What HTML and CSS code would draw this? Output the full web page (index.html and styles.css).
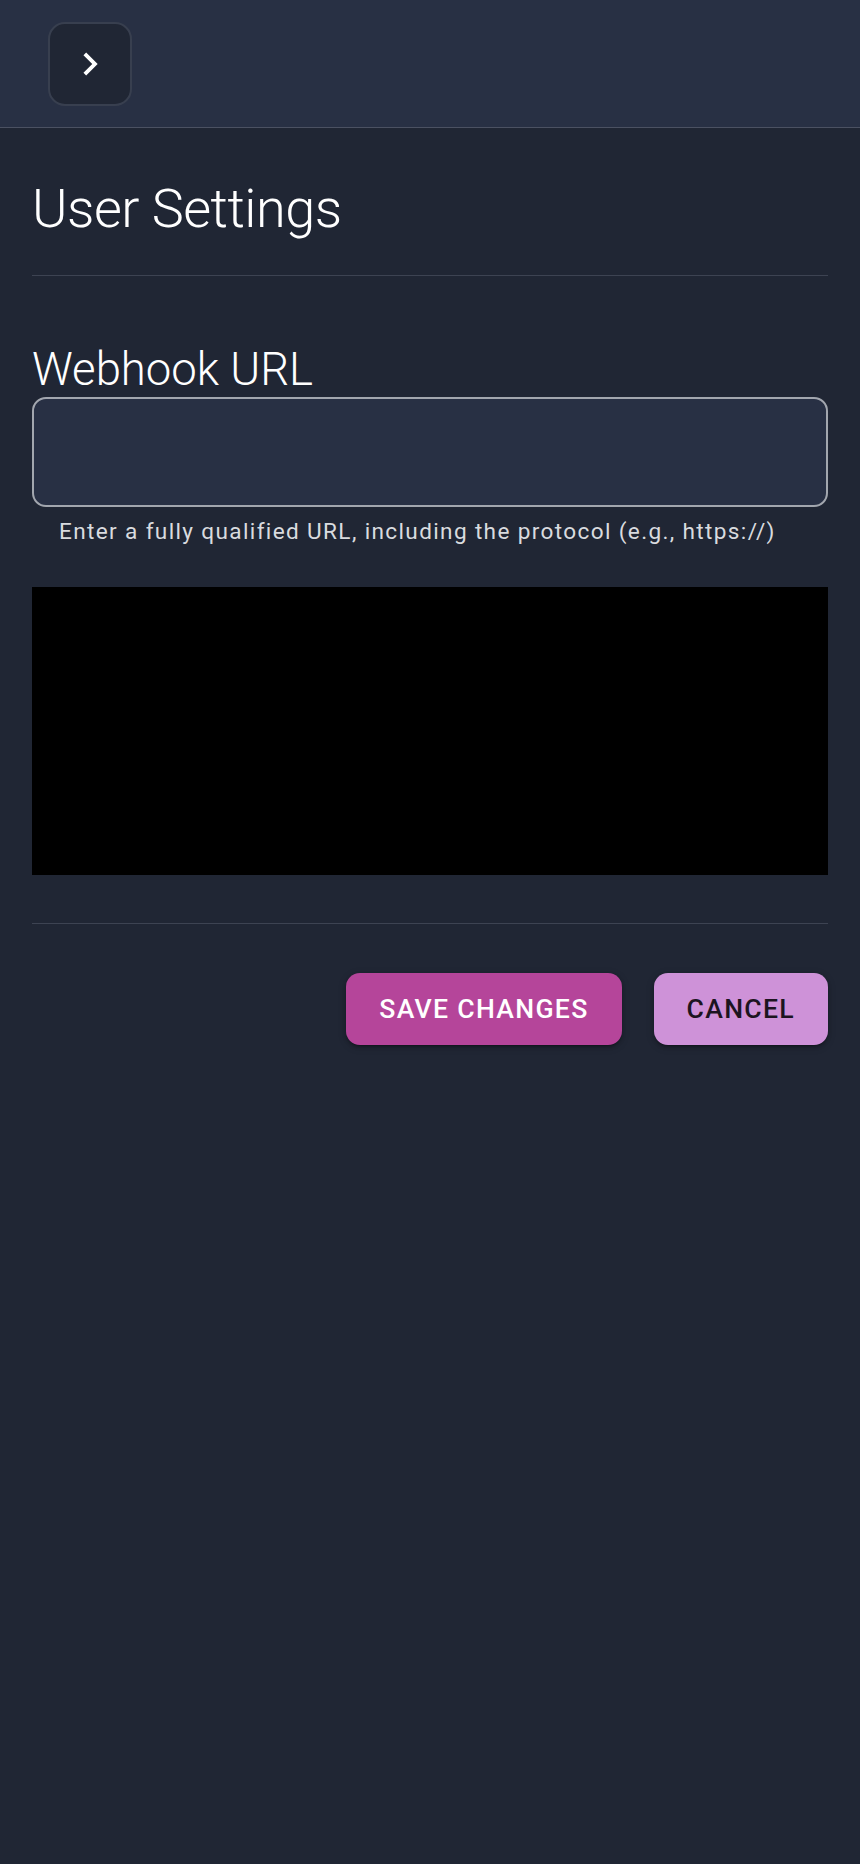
FILE: index.html
```html
<!DOCTYPE html>
<html lang="en">
<head>
<meta charset="utf-8">
<title>User Settings</title>
<link rel="stylesheet" href="styles.css">
</head>
<body>
<header class="topbar">
  <button class="menu-btn" type="button" aria-label="Open menu">
    <svg class="chev" viewBox="0 0 24 24" width="46" height="46" aria-hidden="true"><path d="M10 6 8.59 7.41 13.17 12l-4.58 4.59L10 18l6-6z" fill="#ffffff"/></svg>
  </button>
</header>
<main class="content">
  <h1 class="title">User Settings</h1>
  <hr class="divider">
  <section class="field">
    <label class="field-label" for="webhook">Webhook URL</label>
    <input class="field-input" id="webhook" type="text">
    <p class="helper">Enter a fully qualified URL, including the protocol (e.g., https://)</p>
  </section>
  <div class="black-box"></div>
  <hr class="divider divider-bottom">
  <div class="actions">
    <button class="btn btn-save" type="button">Save Changes</button>
    <button class="btn btn-cancel" type="button">Cancel</button>
  </div>
</main>
</body>
</html>
```

FILE: styles.css
```css
html, body {
  margin: 0;
  padding: 0;
}
body {
  background: #202634;
  font-family: Roboto, "Liberation Sans", sans-serif;
  color: #ffffff;
  min-height: 1864px;
}
.topbar {
  height: 128px;
  background: #283044;
  border-bottom: 1px solid #4b5162;
  display: flex;
  align-items: flex-start;
  padding: 22px 0 0 48px;
  box-sizing: border-box;
}
.menu-btn {
  width: 84px;
  height: 84px;
  border-radius: 17px;
  background: #202634;
  border: 2px solid #383f4f;
  display: flex;
  align-items: center;
  justify-content: center;
  padding: 0;
  box-sizing: border-box;
}
.chev {
  display: block;
}
.content {
  padding: 0 32px;
}
.title {
  margin: 49px 0 0;
  font-size: 54px;
  font-weight: 300;
  line-height: 1.2;
  letter-spacing: -0.5px;
  color: #ffffff;
}
.divider {
  margin: 33px 0 0;
  border: 0;
  height: 1px;
  background: #3d4352;
}
.field {
  margin-top: 67px;
  display: flex;
  flex-direction: column;
}
.field-label {
  font-size: 45.5px;
  font-weight: 300;
  line-height: 1.2;
  color: #ffffff;
}
.field-input {
  margin-top: 0;
  height: 110px;
  box-sizing: border-box;
  background: #283044;
  border: 2px solid #a2a6ae;
  border-radius: 14px;
  color: #fff;
  font-size: 30px;
  padding: 0 26px;
  outline: none;
}
.helper {
  margin: 6px 27px 0;
  font-size: 22.6px;
  line-height: 1.66;
  letter-spacing: 1.35px;
  color: #d9dbdf;
}
.black-box {
  margin-top: 36px;
  height: 288px;
  background: #000000;
}
.divider-bottom {
  margin-top: 48px;
}
.actions {
  margin-top: 49px;
  display: flex;
  justify-content: flex-end;
  gap: 32px;
}
.btn {
  height: 72px;
  padding: 0 33px;
  border: 0;
  border-radius: 14px;
  font-family: Roboto, "Liberation Sans", sans-serif;
  font-size: 26.6px;
  font-weight: 500;
  letter-spacing: 1.3px;
  text-transform: uppercase;
  box-shadow: 0 3px 2px -2px rgba(0,0,0,0.25), 0 2px 4px 0 rgba(0,0,0,0.2), 0 2px 9px 0 rgba(0,0,0,0.15);
}
.btn-save {
  background: #b5459a;
  color: #ffffff;
}
.btn-cancel {
  background: #ce92d8;
  color: #1c1420;
}
```
